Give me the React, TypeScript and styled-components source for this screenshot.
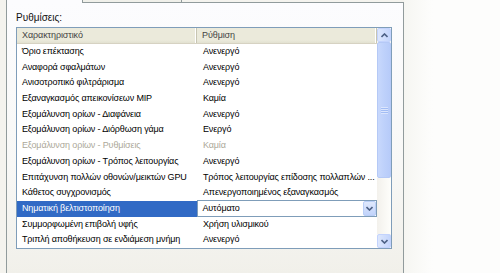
import React from 'react';
import styled, { createGlobalStyle } from 'styled-components';

interface Setting {
  name: string;
  value: string;
  disabled?: boolean;
  selected?: boolean;
}

const settings: Setting[] = [
  { name: 'Όριο επέκτασης', value: 'Ανενεργό' },
  { name: 'Αναφορά σφαλμάτων', value: 'Ανενεργό' },
  { name: 'Ανισοτροπικό φιλτράρισμα', value: 'Ανενεργό' },
  { name: 'Εξαναγκασμός απεικονίσεων MIP', value: 'Καμία' },
  { name: 'Εξομάλυνση ορίων - Διαφάνεια', value: 'Ανενεργό' },
  { name: 'Εξομάλυνση ορίων - Διόρθωση γάμα', value: 'Ενεργό' },
  { name: 'Εξομάλυνση ορίων - Ρυθμίσεις', value: 'Καμία', disabled: true },
  { name: 'Εξομάλυνση ορίων - Τρόπος λειτουργίας', value: 'Ανενεργό' },
  { name: 'Επιτάχυνση πολλών οθονών/μεικτών GPU', value: 'Τρόπος λειτουργίας επίδοσης πολλαπλών ...' },
  { name: 'Κάθετος συγχρονισμός', value: 'Απενεργοποιημένος εξαναγκασμός' },
  { name: 'Νηματική βελτιστοποίηση', value: 'Αυτόματο', selected: true },
  { name: 'Συμμορφωμένη επιβολή υφής', value: 'Χρήση υλισμικού' },
  { name: 'Τριπλή αποθήκευση σε ενδιάμεση μνήμη', value: 'Ανενεργό' },
];

const Chevron: React.FC<{ up?: boolean }> = ({ up }) => (
  <svg width="7" height="5" viewBox="0 0 7 5">
    <path
      d={up ? 'M0.5 4 L3.5 1 L6.5 4' : 'M0.5 1 L3.5 4 L6.5 1'}
      fill="none"
      stroke="#4d6185"
      strokeWidth="1.6"
    />
  </svg>
);

const App: React.FC = () => {
  return (
    <>
      <GlobalStyle />
      <Page>
        <Left>
          <TabStrip>
            <Tab $active />
            <Tab />
            <TabFill />
          </TabStrip>
          <Panel>
            <Label>Ρυθμίσεις:</Label>
            <List>
              <Table>
                <HeaderRow>
                  <HeaderCell>Χαρακτηριστικό</HeaderCell>
                  <HeaderCell>Ρύθμιση</HeaderCell>
                </HeaderRow>
                {settings.map((s) => (
                  <Row key={s.name}>
                    <NameCell $disabled={s.disabled} $selected={s.selected}>
                      {s.name}
                    </NameCell>
                    {s.selected ? (
                      <Combo>
                        <ComboText>{s.value}</ComboText>
                        <ArrowButton>
                          <Chevron />
                        </ArrowButton>
                      </Combo>
                    ) : (
                      <ValueCell $disabled={s.disabled}>{s.value}</ValueCell>
                    )}
                  </Row>
                ))}
              </Table>
              <ScrollBar>
                <ScrollButton>
                  <Chevron up />
                </ScrollButton>
                <Thumb>
                  <Grip />
                </Thumb>
                <Track />
                <ScrollButton>
                  <Chevron />
                </ScrollButton>
              </ScrollBar>
            </List>
          </Panel>
        </Left>
        <Side />
      </Page>
    </>
  );
};

export default App;

const GlobalStyle = createGlobalStyle`
  html, body {
    margin: 0;
    padding: 0;
    background: #fbfbf9;
  }
  body {
    font-family: "Liberation Sans", Arial, sans-serif;
  }
`;

const Page = styled.div`
  width: 500px;
  height: 273px;
  overflow: hidden;
  display: flex;
  background: #fbfbf9;
`;

const Left = styled.div`
  width: 404px;
  padding-left: 6px;
  box-sizing: border-box;
  display: flex;
  flex-direction: column;
  background: #f4f3ee;
`;

const TabStrip = styled.div`
  display: flex;
  height: 3px;
`;

const Tab = styled.div<{ $active?: boolean }>`
  width: ${(p) => (p.$active ? 76 : 100)}px;
  box-sizing: border-box;
  border-left: 1px solid #919b9c;
  border-right: ${(p) => (p.$active ? 'none' : '1px solid #919b9c')};
  border-bottom: ${(p) => (p.$active ? 'none' : '1px solid #919b9c')};
  background: ${(p) => (p.$active ? '#fcfcfe' : '#f0f0ea')};
`;

const TabFill = styled.div`
  flex: 1;
  border-bottom: 1px solid #919b9c;
  border-right: 1px solid #919b9c;
  margin-top: 2px;
`;

const Panel = styled.div`
  flex: 1;
  border-left: 1px solid #919b9c;
  border-right: 1px solid #919b9c;
  padding: 8px 0 0 9px;
  background: linear-gradient(to bottom, #fcfcfe 0%, #f8f8f6 60%, #f1f0ea 100%);
`;

const Label = styled.div`
  font-size: 10px;
  color: #111;
  height: 13px;
  line-height: 13px;
  margin-bottom: 3px;
`;

const List = styled.div`
  width: 376px;
  height: 222px;
  box-sizing: border-box;
  border: 1px solid #7f9db9;
  background: #fff;
  display: flex;
`;

const Table = styled.div`
  width: 360px;
  display: flex;
  flex-direction: column;
`;

const HeaderRow = styled.div`
  display: flex;
  height: 16px;
  flex-shrink: 0;
  background: linear-gradient(to bottom, #ebeadb 0%, #ebeadb 80%, #e2e1d1 100%);
  border-bottom: 1px solid #d6d2c2;
  box-sizing: border-box;
`;

const HeaderCell = styled.div`
  width: 180px;
  box-sizing: border-box;
  padding-left: 5px;
  font-size: 9px;
  line-height: 15px;
  letter-spacing: -0.1px;
  color: #444;
  border-right: 1px solid #c7c5b2;
  box-shadow: inset -1px 0 0 #fff;
  white-space: nowrap;
`;

const Row = styled.div`
  display: flex;
  flex-shrink: 0;
  height: 15.7px;
  font-size: 9px;
  letter-spacing: -0.15px;
  line-height: 15.7px;
`;

const NameCell = styled.div<{ $disabled?: boolean; $selected?: boolean }>`
  width: 180px;
  box-sizing: border-box;
  padding-left: 5px;
  white-space: nowrap;
  overflow: hidden;
  color: ${(p) => (p.$selected ? '#fff' : p.$disabled ? '#aca899' : '#000')};
  background: ${(p) => (p.$selected ? '#316ac5' : 'transparent')};
`;

const ValueCell = styled.div<{ $disabled?: boolean }>`
  width: 180px;
  box-sizing: border-box;
  padding-left: 6px;
  white-space: nowrap;
  overflow: hidden;
  color: ${(p) => (p.$disabled ? '#aca899' : '#000')};
`;

const Combo = styled.div`
  width: 181px;
  height: 17px;
  margin-top: -1px;
  box-sizing: border-box;
  border: 1px solid #7f9db9;
  background: #fff;
  display: flex;
  align-items: center;
  position: relative;
  z-index: 1;
`;

const ComboText = styled.div`
  flex: 1;
  padding-left: 5px;
  line-height: 15px;
`;

const ArrowButton = styled.div`
  width: 13px;
  height: 15px;
  box-sizing: border-box;
  border: 1px solid #bacff7;
  border-radius: 2px;
  background: linear-gradient(to bottom, #e0e9fc, #c1d3fb);
  display: flex;
  align-items: center;
  justify-content: center;
`;

const ScrollBar = styled.div`
  width: 14px;
  display: flex;
  flex-direction: column;
  background: #f8f8f5;
`;

const ScrollButton = styled.div`
  height: 14px;
  flex-shrink: 0;
  box-sizing: border-box;
  border: 1px solid #c3d3fd;
  border-radius: 2px;
  background: linear-gradient(to right, #dde7fd, #c4d5fc);
  display: flex;
  align-items: center;
  justify-content: center;
`;

const Thumb = styled.div`
  height: 136px;
  flex-shrink: 0;
  box-sizing: border-box;
  border: 1px solid #b5c9f6;
  border-radius: 2px;
  background: linear-gradient(to right, #c8d8fc, #bed1fb 50%, #b7cbf9);
  display: flex;
  align-items: center;
  justify-content: center;
`;

const Grip = styled.div`
  width: 7px;
  height: 7px;
  background: repeating-linear-gradient(to bottom, #eef3fe 0 1px, #8faff0 1px 2px);
  opacity: 0.6;
`;

const Track = styled.div`
  flex: 1;
  background: linear-gradient(to right, #f3f1ec, #fefefb);
`;

const Side = styled.div`
  flex: 1;
  background: linear-gradient(to right, #f6f6f2, #fdfdfc 30%);
`;
